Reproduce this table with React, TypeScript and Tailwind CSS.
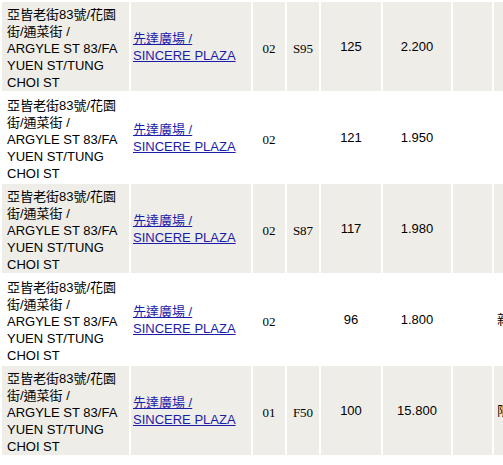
import React from "react";

/* =========================
   DATA
========================= */
const Rows = [
  { code: "02", shop: "S95", size: "125", price: "2.200", extra: "" },
  { code: "02", shop: "", size: "121", price: "1.950", extra: "" },
  { code: "02", shop: "S87", size: "117", price: "1.980", extra: "" },
  { code: "02", shop: "", size: "96", price: "1.800", extra: "新" },
  { code: "01", shop: "F50", size: "100", price: "15.800", extra: "限" },
];

const sans = "font-['Liberation_Sans','Noto_Sans_CJK_TC',sans-serif]";
const serif = "font-['Liberation_Serif','Noto_Sans_CJK_TC',serif]";

/* =========================
   ROW
========================= */
const ListingRow = ({ item, shaded }: any) => {
  const bg = shaded ? "bg-[#efede8]" : "bg-white";
  const cell = `${bg} flex items-center justify-center text-[13px] text-black`;

  return (
    <>
      <div className={`${bg} ${sans} text-[13px] leading-[17px] text-black pl-[5px] pr-1 pt-[4px]`}>
        亞皆老街83號/花園街/通菜街 / ARGYLE ST 83/FA YUEN ST/TUNG CHOI ST
      </div>
      <div className={`${bg} ${sans} flex items-center pl-[2px] text-[13px] leading-[17px]`}>
        <a href="#" className="text-[#1c1ca8] underline">
          先達廣場 /<br />
          SINCERE PLAZA
        </a>
      </div>
      <div className={`${cell} ${serif} pt-[5px]`}>{item.code}</div>
      <div className={`${cell} ${serif} pt-[5px]`}>{item.shop}</div>
      <div className={`${cell} ${sans}`}>{item.size}</div>
      <div className={`${cell} ${sans}`}>{item.price}</div>
      <div className={cell}></div>
      <div className={`${bg} ${sans} flex items-center pl-[3px] text-[13px] text-black`}>
        {item.extra}
      </div>
    </>
  );
};

/* =========================
   MAIN
========================= */
export default function App() {
  return (
    <div className="w-[503px] h-[465px] overflow-hidden bg-white">
      <div className="grid w-max grid-cols-[127px_120px_32px_32px_60px_68px_39px_60px] gap-[2px] p-[2px]">
        {Rows.map((item, i) => (
          <ListingRow key={i} item={item} shaded={i % 2 === 0} />
        ))}
      </div>
    </div>
  );
}
